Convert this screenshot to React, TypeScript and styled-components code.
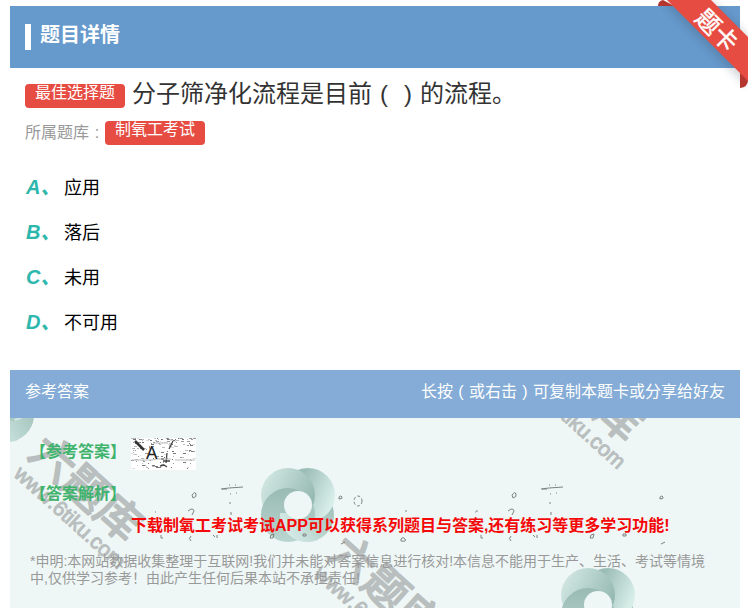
import React from "react";
import styled, { createGlobalStyle } from "styled-components";

const Global = createGlobalStyle`
  * { box-sizing: border-box; }
  body {
    margin: 0;
    background: #fff;
    color: #000;
    font-family: "Liberation Sans", "Noto Sans CJK SC", sans-serif;
    text-spacing-trim: space-all;
    font-kerning: none;
  }
`;

const Page = styled.main`
  position: relative;
  display: flex;
  flex-direction: column;
  min-height: 100vh;
  padding: 6px 10px 0;
  overflow: hidden;
`;

const Header = styled.header`
  display: flex;
  align-items: flex-start;
  gap: 9px;
  height: 62px;
  padding: 18px 15px 0;
  background: #6699cc;
`;

const Marker = styled.span`
  width: 6px;
  height: 26px;
  background: #fff;
`;

const Title = styled.h1`
  margin: 0;
  font-size: 20px;
  line-height: 22px;
  font-weight: 700;
  color: #fff;
`;

const Ribbon = styled.svg`
  position: absolute;
  top: 0;
  right: 2px;
  width: 92px;
  height: 92px;
`;

const Question = styled.section`
  display: flex;
  flex-direction: column;
  padding: 10px 15px 0;
`;

const QuestionLine = styled.div`
  display: flex;
  align-items: center;
  gap: 7px;
  height: 32px;
`;

const QuestionText = styled.h2`
  margin: 0;
  font-size: 24px;
  line-height: 32px;
  font-weight: 400;
  color: #333;
`;

const Paren = styled.span`
  display: inline-block;
  width: 1em;
  text-align: center;
`;

const Tag = styled.span<{ $low?: boolean }>`
  height: 24px;
  margin-top: ${(p) => (p.$low ? "4px" : "0")};
  padding: 0 10px;
  border-radius: 4px;
  background: #e64c42;
  color: #fff;
  font-size: 16px;
  line-height: 18px;
`;

const SourceLine = styled.div`
  display: flex;
  align-items: center;
  height: 24px;
  margin-top: 11px;
  font-size: 16px;
  color: #999;
`;

const SourceLabel = styled.span`
  line-height: 22px;
`;

const Options = styled.ol`
  display: flex;
  flex-direction: column;
  margin: 18px 0 0;
  padding: 0 0 27px 16px;
  list-style: none;
`;

const Option = styled.li`
  display: flex;
  align-items: center;
  height: 45px;
  font-size: 18px;
`;

const Letter = styled.span`
  width: 38px;
  font-size: 20px;
  font-style: italic;
  font-weight: 700;
  color: #2db7ad;
`;

const AnswerBar = styled.div`
  display: flex;
  justify-content: space-between;
  height: 48px;
  padding: 0 15px;
  background: #84acd6;
  color: #fff;
  font-size: 16px;
  line-height: 44px;
`;

const Panel = styled.section`
  position: relative;
  flex: 1;
  padding: 20px 20px 16px;
  background: #eef7f6;
  overflow: hidden;
`;

const Backdrop = styled.svg`
  position: absolute;
  top: 0;
  left: 0;
  width: 100%;
  height: 100%;
`;

const PanelContent = styled.div`
  position: relative;
`;

const AnswerRow = styled.div`
  display: grid;
  grid-template-columns: 101px 1fr;
  height: 42px;
`;

const AnswerLabel = styled.strong`
  height: 32px;
  font-size: 16px;
  line-height: 28px;
  color: #40b36c;
  white-space: nowrap;
`;

const AnswerPicture = styled.span`
  position: relative;
  width: 65px;
  height: 32px;
  background: #fff;
`;

const AnswerLetter = styled.span`
  position: relative;
  display: block;
  padding-left: 15px;
  font-family: "Noto Sans", sans-serif;
  font-size: 18px;
  line-height: 28px;
  color: #222;
`;

const Notice = styled.strong`
  display: block;
  padding-left: 101px;
  margin-top: -10px;
  font-size: 16px;
  line-height: 28px;
  color: #f40808;
  white-space: nowrap;
`;

const Disclaimer = styled.p`
  margin: 13px 0 0;
  font-size: 14px;
  line-height: 17px;
  color: #999;
`;

const swirls = [
  [-12, -13],
  [288, 87],
  [588, 187],
];
const marks = [
  [20, 34],
  [320, 134],
  [520, -66],
];

function Swirl({ x, y }: { x: number; y: number }) {
  return (
    <g transform={`translate(${x} ${y})`} mask="url(#hole)">
      <circle cx="9" cy="10" r="27" fill="url(#br)" />
      <circle cx="10" cy="-10" r="27" fill="url(#tr)" />
      <circle cx="-10" cy="-10" r="27" fill="url(#tl)" />
      <circle cx="-10" cy="10" r="27" fill="url(#bl)" />
      <circle cx="9" cy="10" r="27" fill="url(#br)" clipPath="url(#lower)" />
    </g>
  );
}

function Watermark({ x, y }: { x: number; y: number }) {
  return (
    <g transform={`translate(${x} ${y}) rotate(42)`} fill="#b9bebe" stroke="#b9bebe" strokeLinejoin="round">
      <text x="0" y="5" fontSize="44" strokeWidth="2" fontFamily="Noto Sans CJK SC, sans-serif">
        六题库
      </text>
      <text x="3" y="29" fontSize="21" strokeWidth="1" fontFamily="Liberation Sans, sans-serif">
        www.6tiku.com
      </text>
    </g>
  );
}

function Specks({ x }: { x: number }) {
  return (
    <g transform={`translate(${x} 0)`} fill="none" stroke="#7d827f" strokeWidth="1">
      <path d="M211 71l8-1 14-1M212 71h5M219 67h1M225 67h1M220 76h1M226 75h1M220 84v2M221 94v3M145 94h1" />
      <path d="M182 77q3-4 4-1t-3 4zM178 93q5-4 6 0l-2 4M181 118q-3 3 0 5M151 117v3h2" />
      <path d="M203 117l2 2M207 117v3M260 120q0-4 4-4l-1 4zM293 116h3v2h-3z" />
    </g>
  );
}

function OuterSpecks() {
  return (
    <g fill="none" stroke="#7d827f" strokeWidth="1">
      <path d="M331 126l4-2M651 126l4-2M329 79q2-2 3 0t-3 2zM650 79q2-2 3 0t-3 2zM396 92v2M466 93h2" />
      <path d="M391 121q2-3 4 0t-4 2z" />
      <ellipse cx="348" cy="83" rx="4" ry="5" strokeDasharray="3 2" />
    </g>
  );
}

function Backgrounds() {
  return (
    <Backdrop aria-hidden="true">
      <defs>
        <linearGradient id="tl" x1="0" y1="0.2" x2="1" y2="0.7">
          <stop stopColor="#d3e8e3" />
          <stop offset="1" stopColor="#91b6ae" />
        </linearGradient>
        <linearGradient id="tr" x1="0.3" y1="0.2" x2="1" y2="0.5">
          <stop offset="0.1" stopColor="#9cbdb6" />
          <stop offset="1" stopColor="#d8eee9" />
        </linearGradient>
        <linearGradient id="bl" x1="0.5" y1="0" x2="0.5" y2="1">
          <stop stopColor="#99bbb4" />
          <stop offset="1" stopColor="#b9d5cf" />
        </linearGradient>
        <linearGradient id="br" x1="0" y1="0.8" x2="1" y2="0.2">
          <stop stopColor="#d9eeea" />
          <stop offset="1" stopColor="#9dbfb7" />
        </linearGradient>
        <mask id="hole" maskUnits="userSpaceOnUse" x="-40" y="-40" width="80" height="80">
          <rect x="-40" y="-40" width="80" height="80" fill="#fff" />
          <circle r="14" fill="#000" />
        </mask>
        <clipPath id="lower">
          <path d="M-30 8H0L8 14L20 18V40H-30z" />
        </clipPath>
      </defs>
      {swirls.map(([x, y]) => (
        <Swirl key={x} x={x} y={y} />
      ))}
      {marks.map(([x, y]) => (
        <Watermark key={x} x={x} y={y} />
      ))}
      <Specks x={0} />
      <Specks x={320} />
      <OuterSpecks />
    </Backdrop>
  );
}

function makeGrain() {
  let seed = 29;
  const next = () => (seed = (seed * 16807) % 2147483647) / 2147483647;
  return Array.from({ length: 170 }, () => ({
    x: Math.floor(next() * 63),
    y: Math.floor(Math.pow(next(), 1.5) * 31),
    w: 1 + Math.floor(next() * 3),
    tone: ["#777", "#999", "#bbb", "#ddd"][Math.floor(next() * 4)],
  }));
}
const grain = makeGrain();

function Grain() {
  return (
    <Backdrop viewBox="0 0 65 32" aria-hidden="true">
      {grain.map((g, i) => (
        <path key={i} d={`M${g.x} ${g.y + 0.5}h${g.w}`} stroke={g.tone} />
      ))}
      <path d="M4 3l4 4 5 5" stroke="#333" strokeWidth="2.5" fill="none" />
      <path d="M36 15l-1 10M42 3l-4 8M29 28l4-1 3 2M32 23h7" stroke="#444" strokeWidth="1.3" fill="none" />
      <path d="M1 22h20l5-1h14M44 22h20M22 5h15" stroke="#bbb" fill="none" />
    </Backdrop>
  );
}

const options = [
  ["A", "应用"],
  ["B", "落后"],
  ["C", "未用"],
  ["D", "不可用"],
];

export default function App() {
  return (
    <>
      <Global />
      <Page lang="zh-CN">
        <Header>
          <Marker />
          <Title>题目详情</Title>
        </Header>
        <Ribbon viewBox="656 0 92 92" role="img" aria-label="题卡">
          <defs>
            <filter id="shade" x="-20%" y="-20%" width="140%" height="140%">
              <feGaussianBlur stdDeviation="4" />
            </filter>
          </defs>
          <path d="M667 6l81 81V36L711 0h-44z" fill="#234" opacity="0.2" filter="url(#shade)" />
          <path d="M663 0q-5 1-5 6h16zM740 72v16q8-1 8-8z" fill="#b5352f" />
          <path d="M664 0H711L748 37V81L667 0z" fill="#e64c42" />
          <text
            transform="translate(717 30) rotate(45)"
            textAnchor="middle"
            y="9"
            fontSize="24"
            fill="#fff"
            stroke="#fff"
            strokeWidth="0.5"
            fontFamily="Noto Sans CJK SC, sans-serif"
          >
            题卡
          </text>
        </Ribbon>
        <Question>
          <QuestionLine>
            <Tag $low>最佳选择题</Tag>
            <QuestionText>
              分子筛净化流程是目前<Paren>(</Paren>
              <Paren>)</Paren>的流程。
            </QuestionText>
          </QuestionLine>
          <SourceLine>
            <SourceLabel>
              所属题库<Paren>:</Paren>
            </SourceLabel>
            <Tag>制氧工考试</Tag>
          </SourceLine>
        </Question>
        <Options>
          {options.map(([letter, text]) => (
            <Option key={letter}>
              <Letter>{letter}、</Letter>
              {text}
            </Option>
          ))}
        </Options>
        <AnswerBar>
          <span>参考答案</span>
          <span>
            长按<Paren>(</Paren>或右击<Paren>)</Paren>可复制本题卡或分享给好友
          </span>
        </AnswerBar>
        <Panel>
          <Backgrounds />
          <PanelContent>
            <AnswerRow>
              <AnswerLabel>【参考答案】</AnswerLabel>
              <AnswerPicture>
                <Grain />
                <AnswerLetter>A</AnswerLetter>
              </AnswerPicture>
            </AnswerRow>
            <AnswerRow>
              <AnswerLabel>【答案解析】</AnswerLabel>
            </AnswerRow>
            <Notice>下载制氧工考试考试APP可以获得系列题目与答案,还有练习等更多学习功能!</Notice>
            <Disclaimer>
              *申明:本网站数据收集整理于互联网!我们并未能对答案信息进行核对!本信息不能用于生产、生活、考试等情境中,仅供学习参考！由此产生任何后果本站不承担责任!
            </Disclaimer>
          </PanelContent>
        </Panel>
      </Page>
    </>
  );
}
